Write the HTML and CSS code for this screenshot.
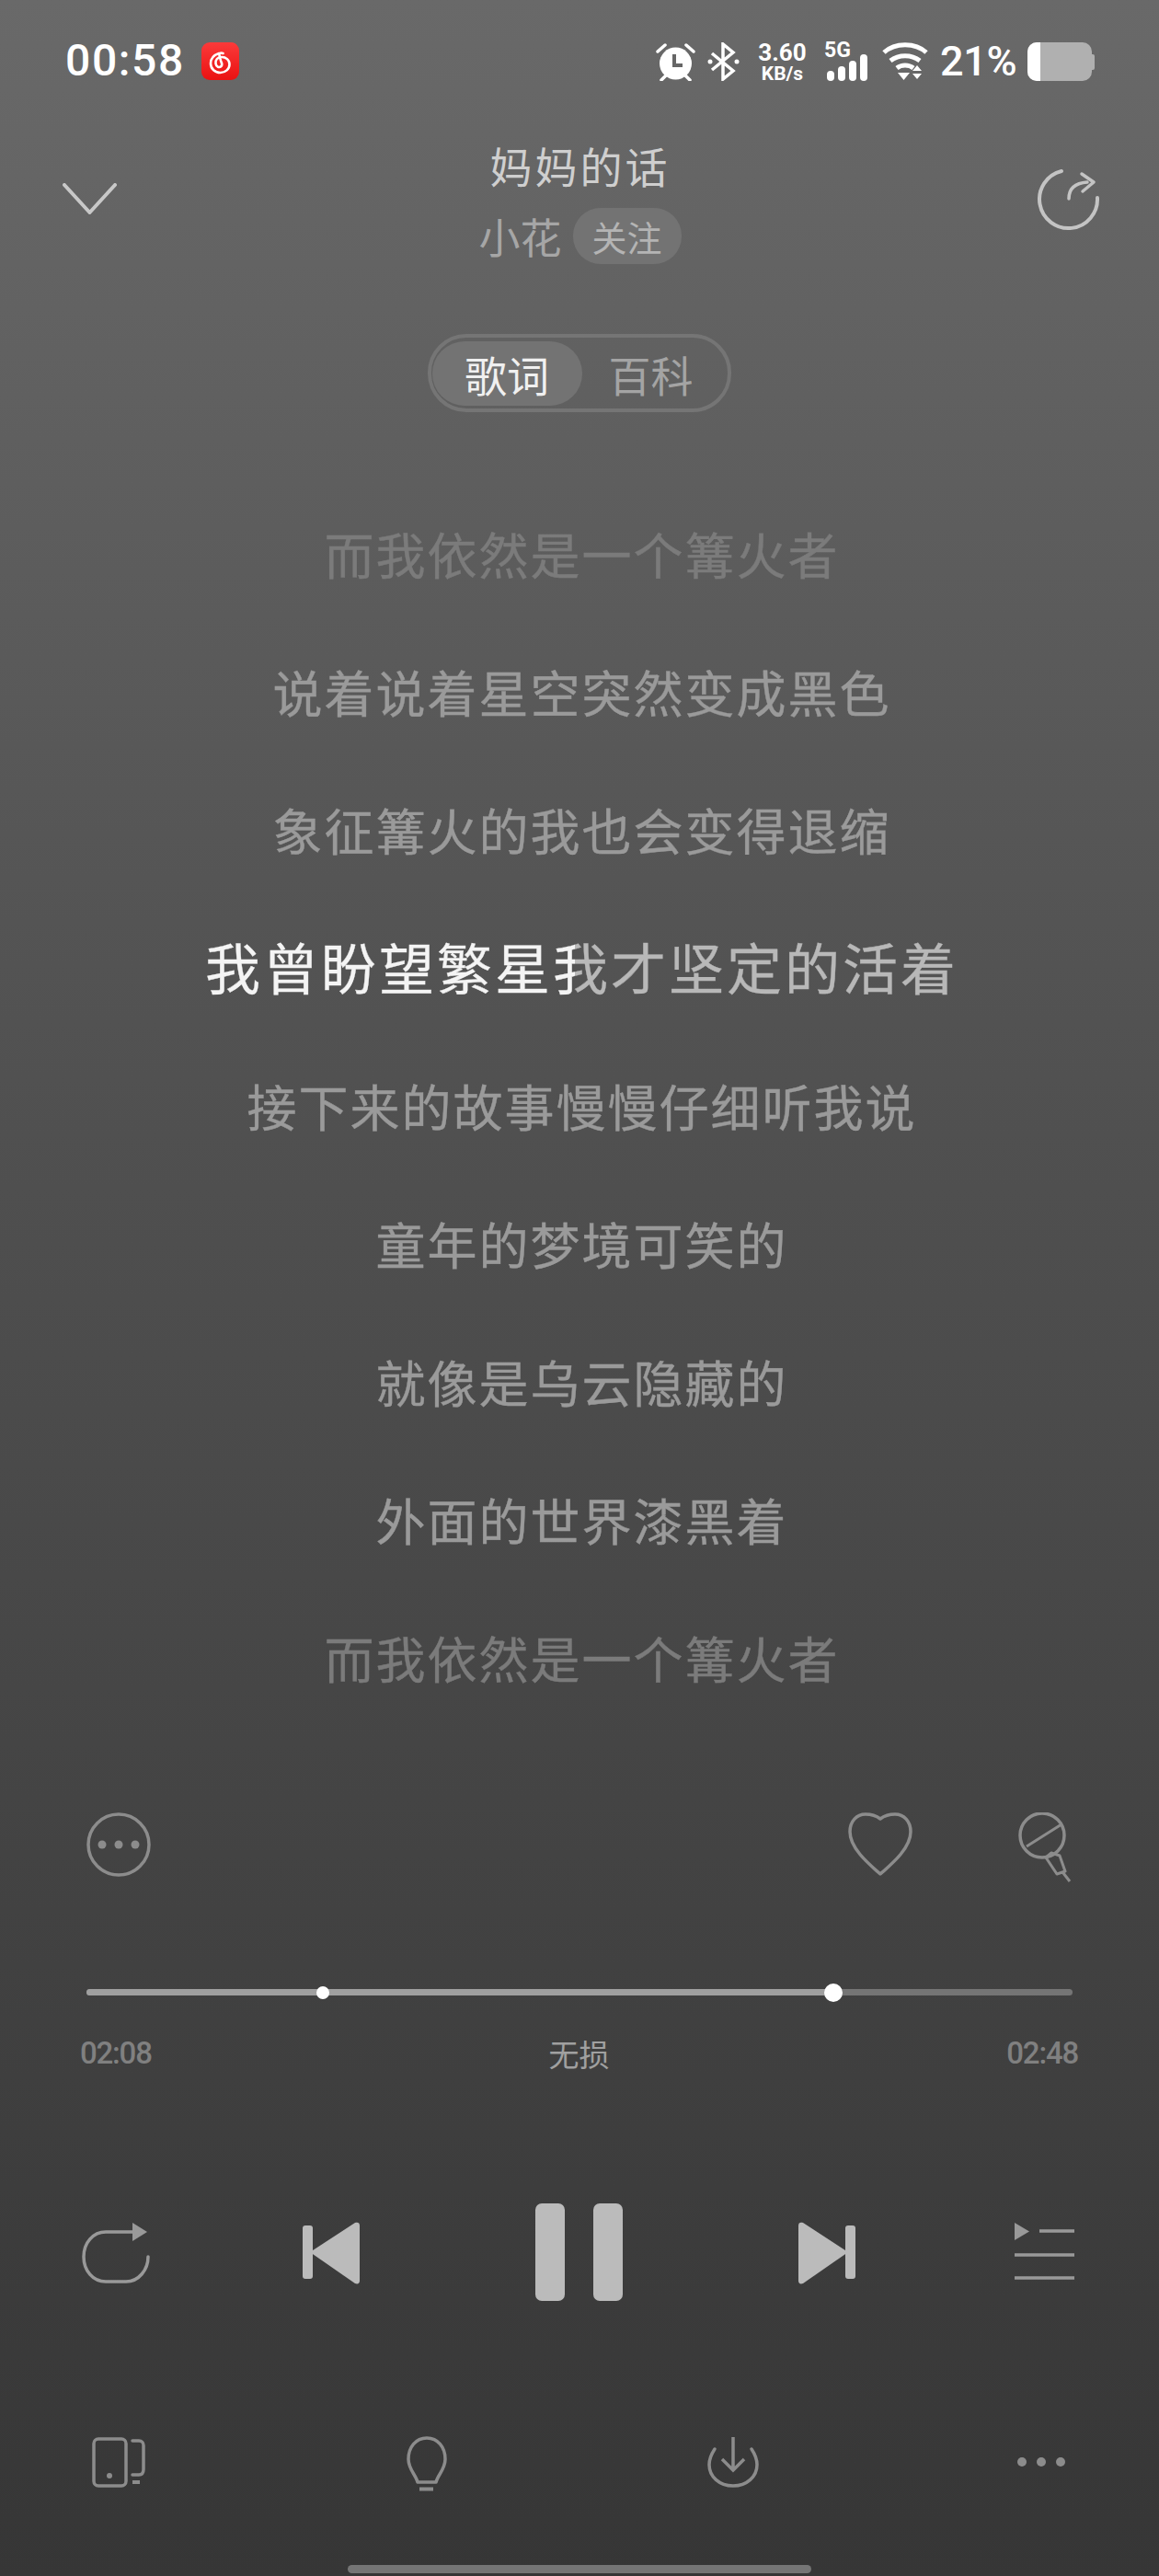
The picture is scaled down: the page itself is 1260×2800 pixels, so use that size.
FILE: index.html
```html
<!DOCTYPE html>
<html lang="zh-CN">

<head>
    <meta charset="UTF-8">
    <meta name="viewport" content="width=device-width, initial-scale=1.0">
    <title>妈妈的话</title>
    <link rel="stylesheet" href="styles.css">
</head>

<body>
    <div class="page">

        <!-- STATUS BAR -->
        <div class="status">
            <span class="clock">00:58</span>
            <svg class="app-icon" width="41" height="41" viewBox="0 0 41 41">
                <defs>
                    <linearGradient id="red" x1="0" y1="0" x2="0" y2="1">
                        <stop offset="0" stop-color="#fb3a3a" />
                        <stop offset="1" stop-color="#ea1212" />
                    </linearGradient>
                </defs>
                <rect width="41" height="41" rx="9" fill="url(#red)" />
                <path d="M19 12c-6 2-9 6-9 11 0 6 5 10 10.500 10s10-4 10-9-4-8-8.500-8-7 3-6.500 7 4 5 6 3 0-4-.5-6l-1.500-6c-.5-2 1-3 4-2" fill="none" stroke="#fff" stroke-width="2.600" stroke-linecap="round" />
            </svg>
            <div class="status-right">
                <svg width="43" height="42" viewBox="0 0 43 42">
                    <circle cx="21.500" cy="23" r="17.500" fill="#fff" />
                    <path d="M20 13v12h9" fill="none" stroke="#666" stroke-width="4" />
                    <path d="M2 10l8-7M41 10l-8-7M6 41l5-5M37 41l-5-5" stroke="#fff" stroke-width="3.500" stroke-linecap="round" />
                </svg>
                <svg width="35" height="42" viewBox="0 0 35 42">
                    <path d="M5 12l23 19-11 9V2l11 9L5 30" fill="none" stroke="#fff" stroke-width="3.500" />
                    <circle cx="3" cy="21" r="2.500" fill="#fff" />
                    <circle cx="32" cy="21" r="2.500" fill="#fff" />
                </svg>
                <div class="speed"><span>3.60</span><span class="speed-unit">KB/s</span></div>
                <div class="signal">
                    <span class="net">5G</span>
                    <div class="bars">
                        <i class="bar-1"></i>
                        <i class="bar-2"></i>
                        <i class="bar-3"></i>
                        <i class="bar-4"></i>
                    </div>
                </div>
                <svg width="50" height="42" viewBox="0 0 50 42">
                    <path d="M2 11c12-11 34-11 46 0M9 20c9-7 23-7 32 0M16 28c5-4 13-4 18 0" fill="none" stroke="#fff" stroke-width="5" />
                    <path d="M17 33h13l-6.500 8zM38 25l5 6H33zM33 34h10l-5 6z" fill="#fff" />
                </svg>
                <span class="percent">21%</span>
                <div class="battery">
                    <div class="battery-body">
                        <div class="battery-level"></div>
                    </div>
                    <div class="battery-nub"></div>
                </div>
            </div>
        </div>

        <!-- HEADER -->
        <div class="header">
            <svg class="down" width="59" height="34" viewBox="0 0 59 34">
                <path d="M2 2l27.500 30L57 2" fill="none" stroke="#c8c8c8" stroke-width="4" stroke-linecap="round" stroke-linejoin="round" />
            </svg>
            <div class="song">
                <div class="song-title">妈妈的话</div>
                <div class="song-artist">小花<span class="follow">关注</span></div>
            </div>
            <svg class="share" width="68" height="68" viewBox="0 0 68 68">
                <path d="M26 3A31.500 31.500 0 1 0 65 32" fill="none" stroke="#c4c4c4" stroke-width="4" stroke-linecap="round" />
                <path d="M34 33c0-10 6-17 20-18" fill="none" stroke="#c4c4c4" stroke-width="3.500" stroke-linecap="round" />
                <path d="M48 6l13 9-12 10" fill="none" stroke="#c4c4c4" stroke-width="3.500" stroke-linecap="round" stroke-linejoin="round" />
            </svg>
        </div>

        <!-- TABS -->
        <div class="tabs-wrap">
            <div class="tabs">
                <span class="tab active">歌词</span>
                <span class="tab">百科</span>
            </div>
        </div>

        <!-- LYRICS -->
        <div class="lyrics">
            <p class="faded">而我依然是一个篝火者</p>
            <p>说着说着星空突然变成黑色</p>
            <p>象征篝火的我也会变得退缩</p>
            <p class="current">我曾盼望繁星我才坚定的活着</p>
            <p>接下来的故事慢慢仔细听我说</p>
            <p>童年的梦境可笑的</p>
            <p>就像是乌云隐藏的</p>
            <p>外面的世界漆黑着</p>
            <p class="faded">而我依然是一个篝火者</p>
        </div>

        <!-- ACTIONS -->
        <div class="actions">
            <svg width="70" height="70" viewBox="0 0 70 70">
                <circle cx="35" cy="35" r="33" fill="none" stroke="#8c8c8c" stroke-width="3.500" />
                <circle cx="17" cy="35" r="4.500" fill="#8c8c8c" />
                <circle cx="35" cy="35" r="4.500" fill="#8c8c8c" />
                <circle cx="53" cy="35" r="4.500" fill="#8c8c8c" />
            </svg>
            <svg class="heart" width="70" height="70" viewBox="0 0 70 70">
                <path d="M35 67C20 54 2 38 2 21 2 10 9 2 19 2c7 0 12 2 16 5 4-3 9-5 16-5 10 0 17 8 17 19 0 17-18 33-33 46z" fill="none" stroke="#8c8c8c" stroke-width="3.500" stroke-linejoin="round" />
            </svg>
            <svg class="mic" width="58" height="76" viewBox="0 0 58 76">
                <circle cx="26" cy="25" r="24" fill="none" stroke="#8c8c8c" stroke-width="3.500" />
                <path d="M9 37L47 13M30 49l6-5 9 3 6 17-9 3zM49 66l7 9" fill="none" stroke="#8c8c8c" stroke-width="3" stroke-linejoin="round" />
            </svg>
        </div>

        <!-- PROGRESS -->
        <div class="progress">
            <div class="track">
                <div class="track-fill" style="width: 75.800%"></div>
                <span class="marker"></span>
                <span class="thumb"></span>
            </div>
        </div>
        <div class="times">
            <span>02:08</span>
            <span class="quality">无损</span>
            <span>02:48</span>
        </div>

        <!-- CONTROLS -->
        <div class="controls">
            <svg class="ctl-repeat" width="74" height="66" viewBox="0 0 74 66">
                <path d="M55 10H26C12 10 2 22 2 37s10 27 24 27h22c14 0 24-13 24-27" fill="none" stroke="#999" stroke-width="3.500" stroke-linecap="round" />
                <path d="M55 0l16 10-16 10z" fill="#999" />
            </svg>
            <svg class="ctl-prev" width="62" height="68" viewBox="0 0 62 68">
                <rect y="4" width="11" height="58" rx="3" fill="#bbb" />
                <path d="M8 33L57 1c3-1 5 0 5 3v60c0 3-2 4-5 3z" fill="#bbb" />
            </svg>
            <div class="pause">
                <span></span>
                <span></span>
            </div>
            <svg class="ctl-next" width="62" height="68" viewBox="0 0 62 68">
                <rect x="51" y="4" width="11" height="58" rx="3" fill="#bbb" />
                <path d="M54 33L5 1C2 0 0 1 0 4v60c0 3 2 4 5 3z" fill="#bbb" />
            </svg>
            <svg class="ctl-queue" width="65" height="62" viewBox="0 0 65 62">
                <path d="M0 0l16 9.500L0 19z" fill="#999" />
                <path d="M27 9h38M0 35h65M0 60h65" stroke="#999" stroke-width="3.500" />
            </svg>
        </div>

        <!-- TOOLS -->
        <div class="tools">
            <svg class="tool-device" width="58" height="56" viewBox="0 0 58 56">
                <rect x="2" y="2" width="35" height="51" rx="5" fill="none" stroke="#8c8c8c" stroke-width="3.500" />
                <circle cx="19" cy="42" r="3" fill="#8c8c8c" />
                <path d="M44 4h7c3 0 5 2 5 5v26c0 4-2 6-5 6h-7" fill="none" stroke="#8c8c8c" stroke-width="3.500" stroke-linecap="round" />
                <path d="M44 49h8" stroke="#8c8c8c" stroke-width="4" />
            </svg>
            <svg class="tool-bulb" width="44" height="60" viewBox="0 0 44 60">
                <path d="M22 2C10 2 2 12 2 25c0 11 8 17 10 25h20c2-8 10-14 10-25C42 12 34 2 22 2z" fill="none" stroke="#8c8c8c" stroke-width="3.500" stroke-linejoin="round" />
                <path d="M14 57.500h15" stroke="#8c8c8c" stroke-width="4" />
            </svg>
            <svg class="tool-download" width="56" height="56" viewBox="0 0 56 56">
                <path d="M8 14C4 20 2 26 2 31c0 13 11 23 26 23s26-10 26-23c0-5-2-11-6-17" fill="none" stroke="#8c8c8c" stroke-width="3.500" stroke-linecap="round" />
                <path d="M28 1v35M16 25l12 12 12-12" fill="none" stroke="#8c8c8c" stroke-width="3.500" />
            </svg>
            <div class="tool-more">
                <i></i>
                <i></i>
                <i></i>
            </div>
        </div>

        <div class="home-bar"></div>
    </div>
</body>

</html>
```

FILE: styles.css
```css
*{
    padding: 0;
    margin: 0;
    box-sizing: border-box;
}
body{
    width: 1260px;
    height: 2800px;
    overflow: hidden;
    font-family: "Noto Sans CJK SC", "Noto Sans", sans-serif;
}
.page{
    width: 1260px;
    height: 2800px;
    display: flex;
    flex-direction: column;
    background: linear-gradient(#696969 0, #535353 1050px, #363636 100%);
}
svg{
    display: block;
    flex-shrink: 0;
}

/* status bar */
.status{
    height: 134px;
    padding: 45px 70px 0 71px;
    display: flex;
    align-items: flex-start;
    color: #fff;
    font-family: Roboto, sans-serif;
}
.clock{
    font-size: 48px;
    line-height: 42px;
    font-weight: 500;
    letter-spacing: 1.600px;
    width: 148px;
}
.app-icon{
    margin-top: 1px;
}
.status-right{
    margin-left: auto;
    display: flex;
    align-items: flex-start;
    padding-top: 1px;
}
.status-right>svg:nth-child(2){
    margin-left: 13px;
}
.speed{
    margin-left: 21px;
    width: 51px;
    display: flex;
    flex-direction: column;
    align-items: center;
    font-size: 26px;
    line-height: 22px;
    font-weight: 700;
}
.speed-unit{
    font-size: 21px;
    line-height: 24px;
    font-weight: 700;
}
.signal{
    margin-left: 20px;
    width: 49px;
    height: 42px;
    position: relative;
}
.net{
    position: absolute;
    left: 0;
    top: 0;
    font-size: 23px;
    line-height: 17px;
    font-weight: 700;
}
.bars{
    position: absolute;
    left: 3px;
    bottom: 0;
    display: flex;
    gap: 4px;
    align-items: flex-end;
}
.bars i{
    display: block;
    width: 8px;
    border-radius: 4px;
    background: #fff;
}
.bar-1{ height: 11px; }
.bar-2{ height: 16px; }
.bar-3{ height: 22px; }
.bar-4{ height: 29px; }
.signal+svg{
    margin-left: 14px;
}
.percent{
    margin-left: 13px;
    width: 82px;
    font-size: 45px;
    line-height: 42px;
    font-weight: 500;
    letter-spacing: -0.300px;
}
.battery{
    margin-left: 13px;
    width: 73px;
    height: 42px;
    display: flex;
    align-items: center;
}
.battery-body{
    width: 70px;
    height: 42px;
    border-radius: 10px;
    background: #b0b0b0;
    overflow: hidden;
}
.battery-level{
    width: 14px;
    height: 100%;
    background: #fff;
}
.battery-nub{
    width: 3px;
    height: 17px;
    border-radius: 0 2px 2px 0;
    background: #b0b0b0;
}

/* header */
.header{
    height: 170px;
    padding: 0 64px 0 68px;
    display: flex;
    align-items: flex-start;
    justify-content: space-between;
}
.down{
    margin-top: 65px;
}
.share{
    margin-top: 49px;
}
.song{
    display: flex;
    flex-direction: column;
    align-items: center;
    margin-left: 6px;
}
.song-title{
    font-size: 46px;
    line-height: 64px;
    letter-spacing: 3px;
    color: #cfcfcf;
    margin-top: 13px;
}
.song-artist{
    display: flex;
    align-items: center;
    font-size: 45px;
    line-height: 61px;
    color: #a6a6a6;
    margin-top: 15px;
}
.follow{
    margin-left: 12px;
    padding: 0 21px;
    height: 61px;
    line-height: 61px;
    border-radius: 30px;
    font-size: 38px;
    background: #737373;
    color: #b4b4b4;
}

/* tabs */
.tabs-wrap{
    display: flex;
    justify-content: center;
    padding-right: 1px;
    margin-top: 59px;
}
.tabs{
    width: 330px;
    height: 85px;
    padding: 4px;
    display: flex;
    border: 4px solid #757575;
    border-radius: 42px;
}
.tab{
    flex-shrink: 0;
    width: 150px;
    height: 70px;
    text-align: center;
    font-size: 46px;
    line-height: 70px;
    border-radius: 35px;
    color: #a4a4a4;
}
.active{
    width: 163px;
    background: #737373;
    color: #f0f0f0;
    margin-left: -3px;
}

/* lyrics */
.lyrics{
    margin-top: 79px;
}
.lyrics p{
    height: 150px;
    line-height: 150px;
    padding-left: 5px;
    text-align: center;
    font-size: 54px;
    letter-spacing: 2px;
    color: #9a9a9a;
    -webkit-text-stroke: 0.400px;
    white-space: nowrap;
}
.lyrics .faded{
    color: #7b7b7b;
}
.lyrics .current{
    line-height: 146px;
    font-size: 60px;
    letter-spacing: 3px;
    background: linear-gradient(90deg, #f4f4f4 0, #f4f4f4 625px, #b8b8b8 625px, #b8b8b8 100%);
    -webkit-background-clip: text;
    background-clip: text;
    color: transparent;
}

/* actions */
.actions{
    margin-top: 93px;
    padding: 0 95px 0 94px;
    display: flex;
    align-items: flex-start;
}
.heart{
    margin-left: auto;
}
.mic{
    margin-left: 115px;
}

/* progress */
.progress{
    margin-top: 116px;
    padding: 0 94px;
}
.track{
    position: relative;
    height: 7px;
    border-radius: 4px;
    background: #757575;
}
.track-fill{
    height: 100%;
    border-radius: 4px;
    background: #a0a0a0;
}
.marker{
    position: absolute;
    left: 250px;
    top: -3.500px;
    width: 14px;
    height: 14px;
    border-radius: 50%;
    background: #fff;
}
.thumb{
    position: absolute;
    left: 802px;
    top: -6.500px;
    width: 20px;
    height: 20px;
    border-radius: 50%;
    background: #fff;
}
.times{
    margin-top: 40px;
    padding: 0 88px 0 87px;
    display: flex;
    justify-content: space-between;
    align-items: center;
    font-family: Roboto, sans-serif;
    font-size: 33px;
    font-weight: 500;
    letter-spacing: -1.200px;
    line-height: 46px;
    color: #808080;
}
.quality{
    font-family: "Noto Sans CJK SC", sans-serif;
    font-size: 33px;
    font-weight: 400;
    letter-spacing: 0;
    color: #a0a0a0;
}

/* controls */
.controls{
    margin-top: 140px;
    padding-left: 89px;
    height: 106px;
    display: flex;
    align-items: center;
}
.ctl-repeat{
    margin-top: 2px;
}
.ctl-prev{
    margin-left: 166px;
    margin-top: 2px;
}
.pause{
    margin-left: 191px;
    display: flex;
    gap: 31px;
}
.pause span{
    display: block;
    width: 32px;
    height: 106px;
    border-radius: 7px;
    background: #bbb;
}
.ctl-next{
    margin-left: 191px;
    margin-top: 2px;
}
.ctl-queue{
    margin-left: 173px;
    margin-top: -2px;
}

/* bottom tools */
.tools{
    margin-top: 147px;
    height: 60px;
    padding-left: 100px;
    display: flex;
    align-items: flex-start;
}
.tool-device{
    margin-top: 1px;
}
.tool-bulb{
    margin-left: 284px;
}
.tool-download{
    margin-left: 283px;
}
.tool-more{
    margin-left: 281px;
    margin-top: 23px;
    display: flex;
    gap: 11px;
}
.tool-more i{
    display: block;
    width: 10px;
    height: 10px;
    border-radius: 50%;
    background: #8c8c8c;
}
.home-bar{
    margin: 80px auto 0;
    width: 504px;
    height: 9px;
    border-radius: 5px;
    background: #757575;
}
```
